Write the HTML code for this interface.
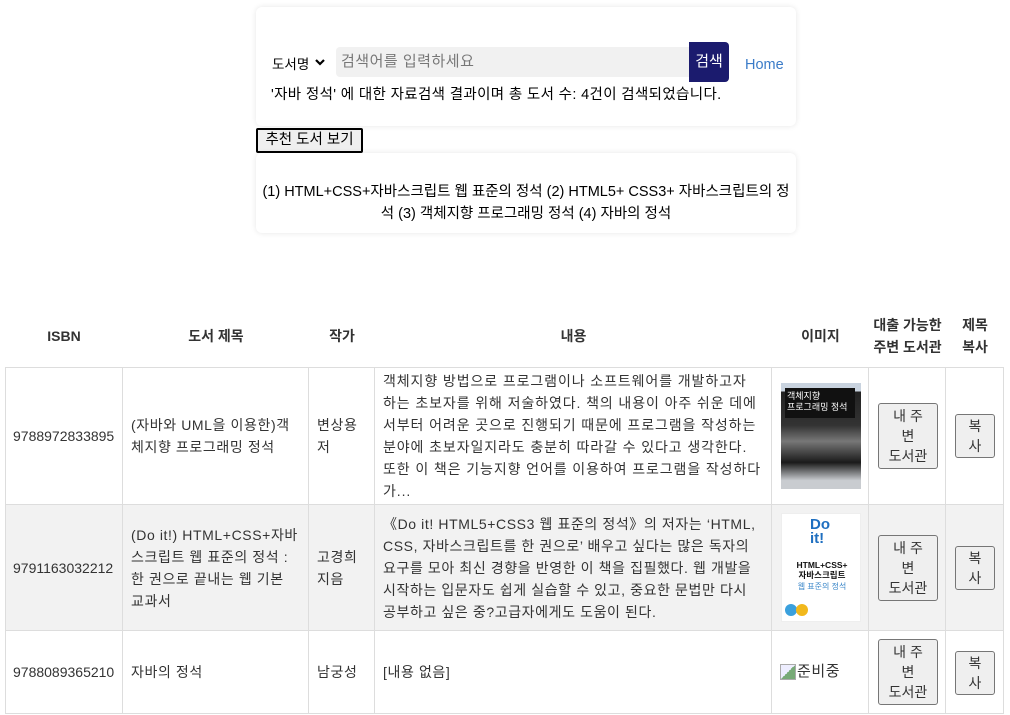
<!DOCTYPE html>
<html><head><meta charset="utf-8"><style>
*{box-sizing:border-box;margin:0;padding:0}
body{width:1010px;height:715px;background:#fff;font-family:"Liberation Sans","Noto Sans CJK KR",sans-serif;color:#333;font-size:14px;position:relative;overflow:hidden}
.abs{position:absolute}
.card{position:absolute;background:#fff;border-radius:6px;box-shadow:0 0 6px rgba(0,0,0,0.10)}
.c{position:absolute;border-right:1px solid #ddd;border-bottom:1px solid #ddd;display:flex;align-items:center;line-height:22px;padding:0 8px;letter-spacing:0.6px;white-space:nowrap}
.t{letter-spacing:0.9px}
.h{position:absolute;display:flex;align-items:center;justify-content:center;text-align:center;font-weight:bold;line-height:22px}
.btn{background:#efefef;border:1px solid #767676;border-radius:3px;text-align:center;line-height:20px;color:#333;font-size:14px}
</style></head><body>
<div class="card" style="left:256px;top:7px;width:540px;height:119px"></div>
<div class="abs" style="left:272px;top:53px;font-size:13.5px;color:#000">도서명</div>
<svg class="abs" style="left:314px;top:57px" width="12" height="10" viewBox="0 0 12 10"><path d="M2 3 L6 7 L10 3" stroke="#000" stroke-width="2.2" fill="none"/></svg>
<div class="abs" style="left:336px;top:47px;width:354px;height:30px;background:#f1f1f1;border-radius:4px 0 0 4px;color:#777;font-size:15px;line-height:30px;padding-left:5px;letter-spacing:0.5px">검색어를 입력하세요</div>
<div class="abs" style="left:689px;top:42px;width:40px;height:40px;background:#1b1b6e;border-radius:0 4px 4px 0;color:#fff;font-size:15px;line-height:40px;text-align:center">검색</div>
<div class="abs" style="left:745px;top:57px;color:#3a7bc8;font-size:14.5px">Home</div>
<div class="abs" style="left:271px;top:83px;color:#000;font-size:14.5px;letter-spacing:0.35px">'자바 정석' 에 대한 자료검색 결과이며 총 도서 수: 4건이 검색되었습니다.</div>
<div class="abs" style="left:256px;top:128px;width:107px;height:25px;border:2px solid #000;border-radius:2px;background:#efefef;color:#000;font-size:14.5px;line-height:21px;text-align:center">추천 도서 보기</div>
<div class="card" style="left:256px;top:153px;width:540px;height:80px"></div>
<div class="abs" style="left:256px;top:181px;width:540px;text-align:center;color:#000;font-size:14.5px;line-height:22px">(1) HTML+CSS+자바스크립트 웹 표준의 정석 (2) HTML5+ CSS3+ 자바스크립트의 정<br>석 (3) 객체지향 프로그래밍 정석 (4) 자바의 정석</div>

<div class="h" style="left:5px;top:305px;width:118px;height:62px">ISBN</div>
<div class="h" style="left:123px;top:305px;width:186px;height:62px">도서 제목</div>
<div class="h" style="left:309px;top:305px;width:66px;height:62px">작가</div>
<div class="h" style="left:375px;top:305px;width:397px;height:62px">내용</div>
<div class="h" style="left:772px;top:305px;width:97px;height:62px">이미지</div>
<div class="h" style="left:869px;top:305px;width:77px;height:62px">대출 가능한<br>주변 도서관</div>
<div class="h" style="left:946px;top:305px;width:58px;height:62px">제목<br>복사</div>

<div class="abs" style="left:5px;top:505px;width:999px;height:126px;background:#f2f2f2"></div>
<div class="abs" style="left:5px;top:367px;width:999px;height:1px;background:#ddd"></div>
<div class="abs" style="left:5px;top:367px;width:1px;height:347px;background:#ddd"></div>

<!-- row1 -->
<div class="c" style="left:5px;top:367px;width:118px;height:138px;letter-spacing:0">9788972833895</div>
<div class="c" style="left:123px;top:367px;width:186px;height:138px">(자바와 UML을 이용한)객<br>체지향 프로그래밍 정석</div>
<div class="c" style="left:309px;top:367px;width:66px;height:138px">변상용<br>저</div>
<div class="c t" style="left:375px;top:367px;width:397px;height:138px">객체지향 방법으로 프로그램이나 소프트웨어를 개발하고자<br>하는 초보자를 위해 저술하였다. 책의 내용이 아주 쉬운 데에<br>서부터 어려운 곳으로 진행되기 때문에 프로그램을 작성하는<br>분야에 초보자일지라도 충분히 따라갈 수 있다고 생각한다.<br>또한 이 책은 기능지향 언어를 이용하여 프로그램을 작성하다<br>가...</div>
<div class="c" style="left:772px;top:367px;width:97px;height:138px"></div>
<div class="c" style="left:869px;top:367px;width:77px;height:138px"></div>
<div class="c" style="left:946px;top:367px;width:58px;height:138px"></div>
<!-- row2 -->
<div class="c" style="left:5px;top:505px;width:118px;height:126px;letter-spacing:0">9791163032212</div>
<div class="c" style="left:123px;top:505px;width:186px;height:126px">(Do it!) HTML+CSS+자바<br>스크립트 웹 표준의 정석 :<br>한 권으로 끝내는 웹 기본<br>교과서</div>
<div class="c" style="left:309px;top:505px;width:66px;height:126px">고경희<br>지음</div>
<div class="c t" style="left:375px;top:505px;width:397px;height:126px;letter-spacing:0.6px">《Do it! HTML5+CSS3 웹 표준의 정석》의 저자는 ‘HTML,<br>CSS, 자바스크립트를 한 권으로’ 배우고 싶다는 많은 독자의<br>요구를 모아 최신 경향을 반영한 이 책을 집필했다. 웹 개발을<br>시작하는 입문자도 쉽게 실습할 수 있고, 중요한 문법만 다시<br>공부하고 싶은 중?고급자에게도 도움이 된다.</div>
<div class="c" style="left:772px;top:505px;width:97px;height:126px"></div>
<div class="c" style="left:869px;top:505px;width:77px;height:126px"></div>
<div class="c" style="left:946px;top:505px;width:58px;height:126px"></div>
<!-- row3 -->
<div class="c" style="left:5px;top:631px;width:118px;height:83px;letter-spacing:0">9788089365210</div>
<div class="c" style="left:123px;top:631px;width:186px;height:83px">자바의 정석</div>
<div class="c" style="left:309px;top:631px;width:66px;height:83px">남궁성</div>
<div class="c" style="left:375px;top:631px;width:397px;height:83px">[내용 없음]</div>
<div class="c" style="left:772px;top:631px;width:97px;height:83px;font-size:15px"><span style="display:inline-block;width:16px;height:16px;border:1px solid #aaa;background:linear-gradient(135deg,#eef 50%,#7a7 50%);margin-right:1px"></span>준비중</div>
<div class="c" style="left:869px;top:631px;width:77px;height:83px"></div>
<div class="c" style="left:946px;top:631px;width:58px;height:83px"></div>

<!-- covers -->
<div class="abs" style="left:781px;top:383px;width:80px;height:106px;background:linear-gradient(#c9d3df 0,#c9d3df 8%,#222 8%,#333 40%,#777 55%,#1a1a1a 75%,#c9ccd0 92%)"></div>
<div class="abs" style="left:785px;top:388px;width:70px;height:30px;background:#111;color:#fff;font-size:9px;line-height:11px;padding:3px 2px">객체지향<br>프로그래밍 정석</div>
<div class="abs" style="left:781px;top:513px;width:80px;height:109px;background:#fff;border:1px solid #eee"></div>
<div class="abs" style="left:810px;top:518px;color:#1f6fc0;font-weight:bold;font-size:15px;line-height:14px">Do<br>it!</div>
<div class="abs" style="left:787px;top:560px;color:#111;font-weight:bold;font-size:8.5px;line-height:10px;text-align:center;width:70px">HTML+CSS+<br>자바스크립트</div>
<div class="abs" style="left:791px;top:581px;color:#3b87c9;font-size:8px;width:62px;text-align:center">웹 표준의 정석</div>
<div class="abs" style="left:785px;top:604px;width:12px;height:12px;border-radius:50%;background:#3aa0dd"></div>
<div class="abs" style="left:796px;top:604px;width:12px;height:12px;border-radius:50%;background:#f1b81c"></div>

<!-- buttons -->
<div class="abs btn" style="left:878px;top:403px;width:60px;height:66px;padding-top:2px">내 주<br>변<br>도서관</div>
<div class="abs btn" style="left:955px;top:414px;width:40px;height:44px;padding-top:1px">복<br>사</div>
<div class="abs btn" style="left:878px;top:535px;width:60px;height:66px;padding-top:2px">내 주<br>변<br>도서관</div>
<div class="abs btn" style="left:955px;top:546px;width:40px;height:44px;padding-top:1px">복<br>사</div>
<div class="abs btn" style="left:878px;top:639px;width:60px;height:66px;padding-top:2px">내 주<br>변<br>도서관</div>
<div class="abs btn" style="left:955px;top:651px;width:40px;height:44px;padding-top:1px">복<br>사</div>
</body></html>
